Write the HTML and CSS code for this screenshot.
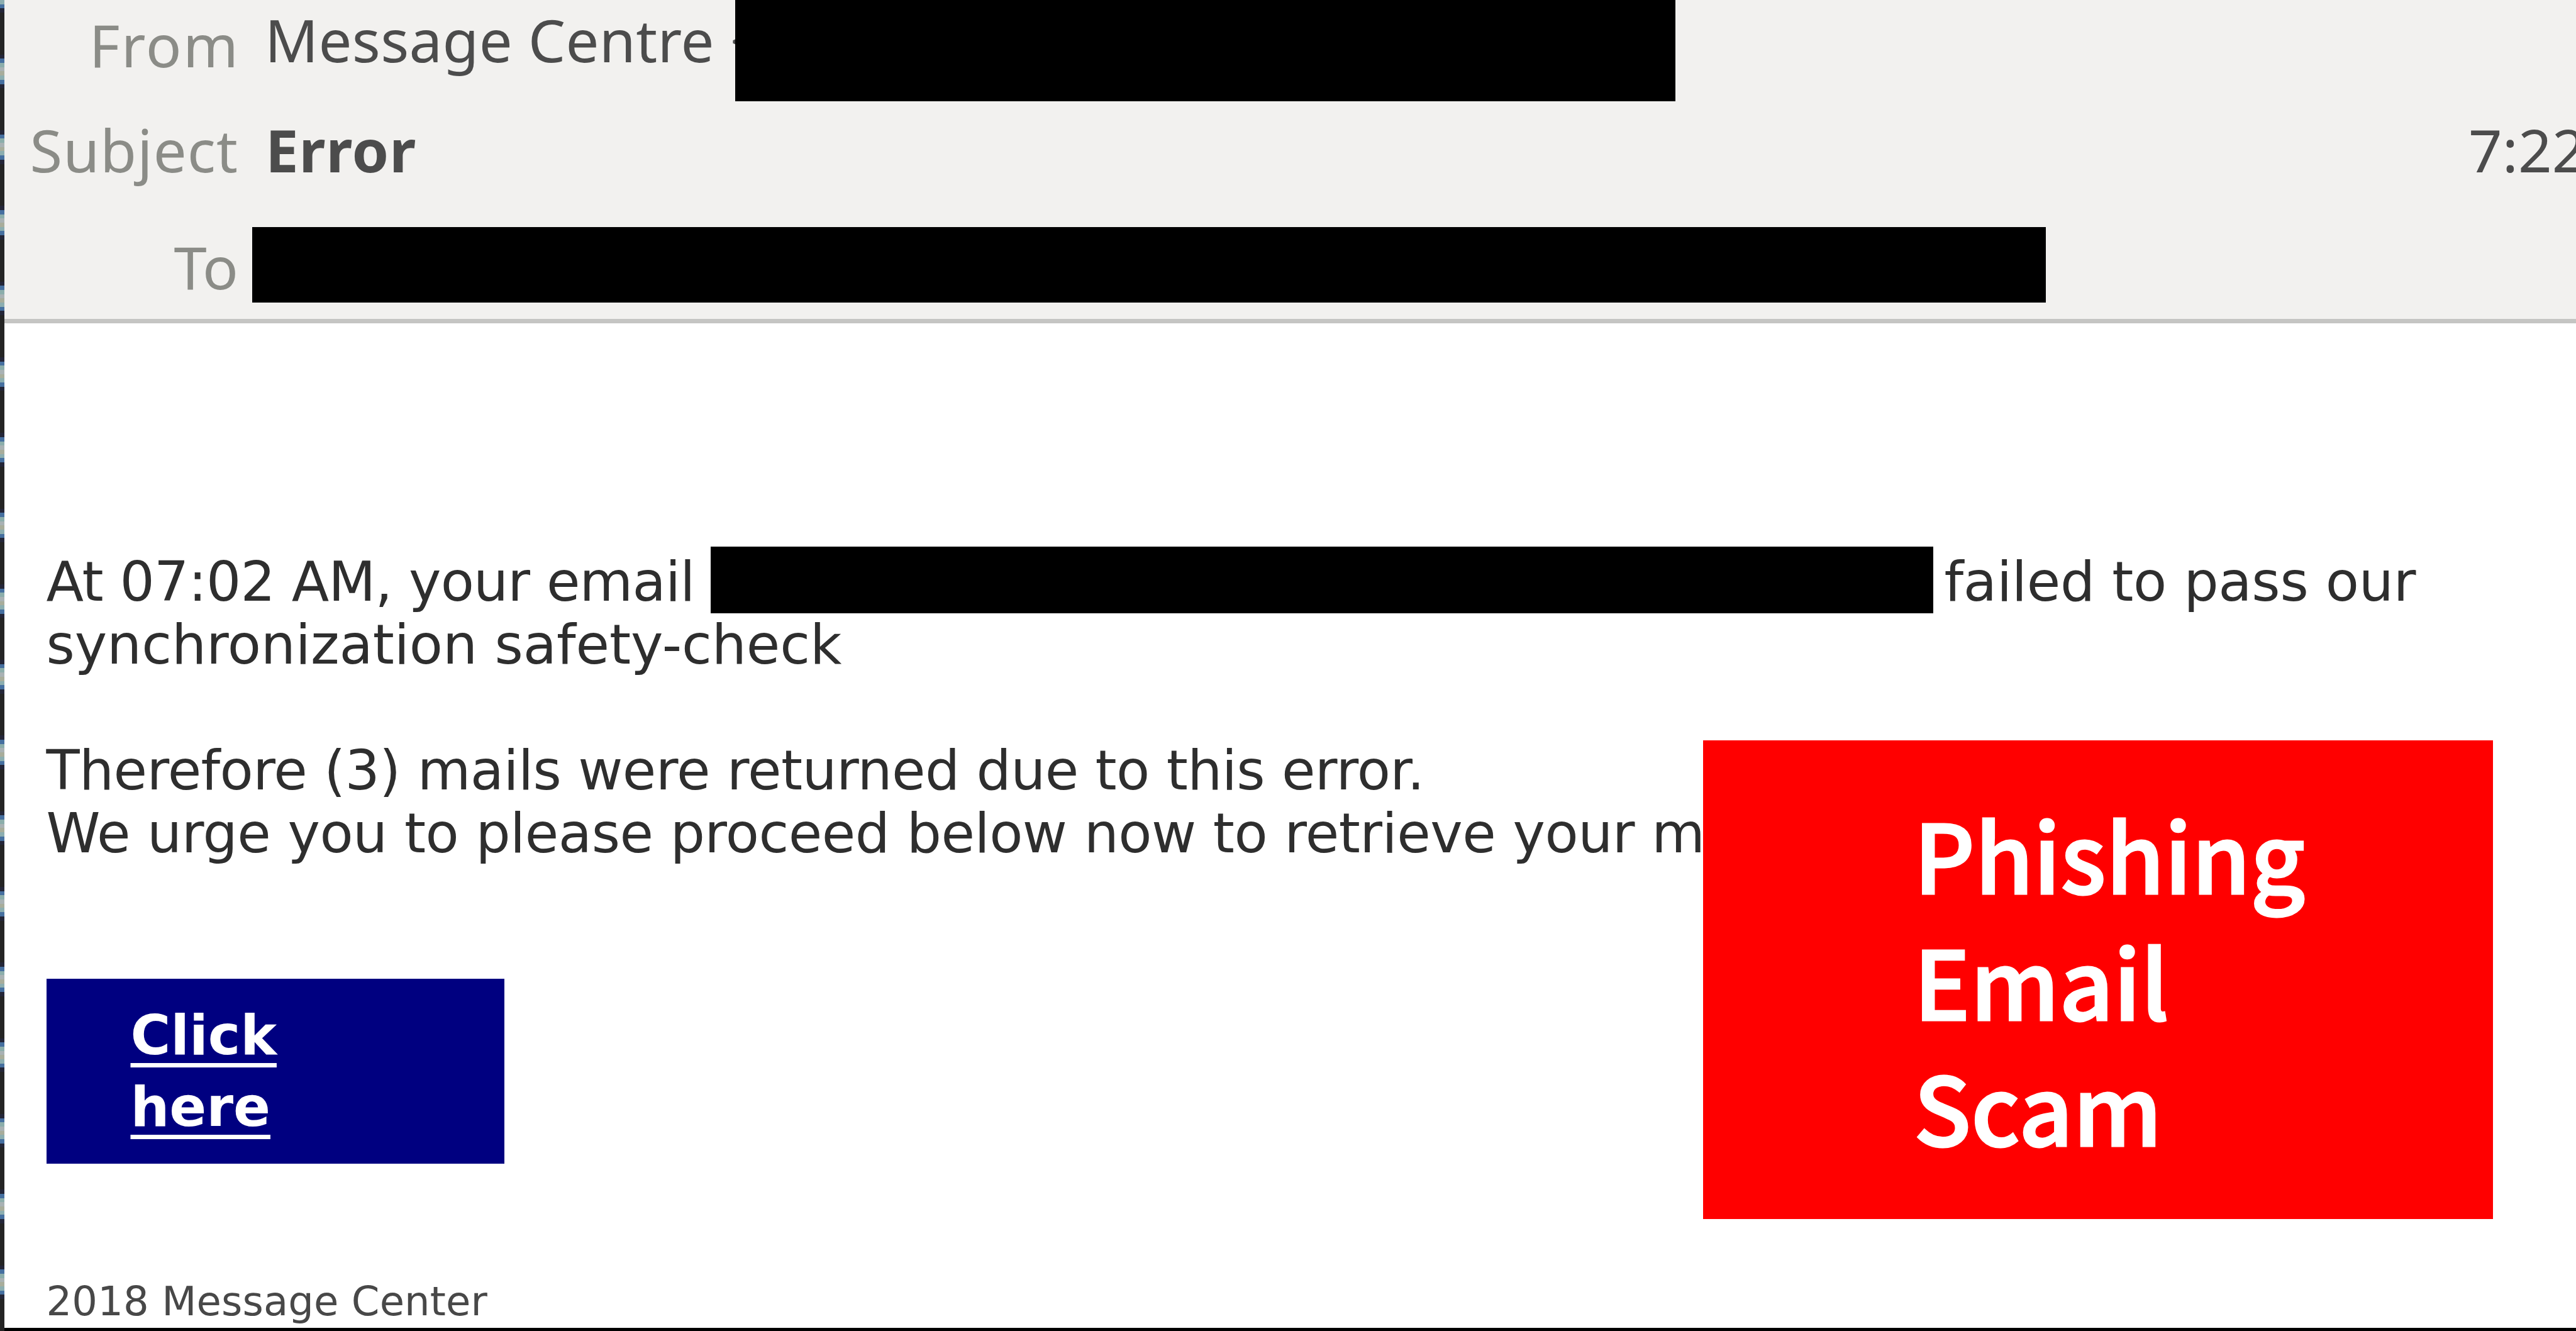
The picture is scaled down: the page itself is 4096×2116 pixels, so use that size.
FILE: index.html
```html
<!DOCTYPE html>
<html lang="en">
<head>
    <meta charset="UTF-8">
    <title>Error - Message Centre</title>
    <link rel="stylesheet" href="styles.css">
</head>
<body>
<div class="desktop-edge"></div>
<div class="mail-window">
    <div class="mail-header">
        <div class="header-row from-row">
            <div class="label">From</div>
            <div class="value">Message Centre &lt;</div>
            <div class="redacted redacted-from"></div>
        </div>
        <div class="header-row subject-row">
            <div class="label">Subject</div>
            <div class="value subject">Error</div>
            <div class="time">7:22</div>
        </div>
        <div class="header-row to-row">
            <div class="label">To</div>
            <div class="redacted redacted-to"></div>
        </div>
    </div>

    <div class="mail-body">
        <div class="first-line">
            <span class="intro">At 07:02 AM, your email</span>
            <div class="redacted redacted-email"></div>
            <span class="outro">failed to pass our</span>
        </div>
        <p>synchronization safety-check</p>
        <p class="returned">Therefore (3) mails were returned due to this error.</p>
        <p class="urge">We urge you to please proceed below now to retrieve your m</p>
        <div class="button"><a href="#">Click<br>here</a></div>
        <div class="footer">2018 Message Center</div>
    </div>
</div>

<div class="stamp">Phishing<br>Email<br>Scam</div>
</body>
</html>
```
FILE: styles.css
```css
* {
    margin: 0;
    padding: 0;
    box-sizing: border-box;
}
body {
    position: relative;
    display: flex;
    width: 4096px;
    height: 2116px;
    overflow: hidden;
    background: #fff;
}
.desktop-edge {
    width: 6.5px;
    flex: none;
    background: repeating-linear-gradient(to bottom,
        #4670a0 0 6.69px,
        #8caeab 6.69px 13.38px,
        #a9b2b4 13.38px 20.07px,
        #a8ad9b 20.07px 26.76px,
        #8caeb0 26.76px 33.45px,
        #4670a0 33.45px 40.14px,
        #242638 40.14px 46.83px,
        #242424 46.83px 113.6px,
        #242638 113.6px 120.3px);
    background-position: 0 -26.9px;
    background-size: 100% 2200px;
}
.mail-window {
    flex: 1;
    min-width: 0;
    overflow: hidden;
    border-bottom: 5px solid #000;
}
.mail-header {
    height: 514px;
    background: #f2f1ef;
    border-bottom: 7px solid #c5c5c3;
    font-family: "Noto Sans", sans-serif;
    font-size: 94px;
    line-height: 120px;
    color: #4c4c4c;
    white-space: nowrap;
}
.header-row {
    display: flex;
    align-items: flex-start;
}
.from-row {
    height: 178px;
}
.subject-row {
    height: 183px;
}
.label {
    width: 375.5px;
    flex: none;
    padding-right: 3px;
    text-align: right;
    color: #8b8c87;
}
.from-row .label {
    padding-top: 11px;
    padding-right: 1px;
    letter-spacing: 2.2px;
}
.subject-row .label {
    letter-spacing: 1.1px;
}
.to-row .label {
    padding-top: 3px;
}
.value {
    margin-left: 39px;
}
.from-row .value {
    width: 748px;
    padding-top: 3px;
    overflow: hidden;
    letter-spacing: 0.3px;
}
.subject {
    margin-left: 40px;
    font-weight: bold;
    letter-spacing: 0.9px;
}
.time {
    width: 171px;
    margin-left: auto;
}
.redacted {
    flex: none;
    background: #000;
}
.redacted-from {
    width: 1495px;
    height: 161px;
}
.redacted-to {
    width: 2852px;
    height: 120px;
    margin-left: 19px;
}
.mail-body {
    padding: 361px 0 0 67px;
    font-family: "DejaVu Sans", sans-serif;
    font-size: 87px;
    line-height: 100.1px;
    letter-spacing: -0.1px;
    color: #2e2e2e;
    white-space: nowrap;
}
.first-line {
    display: flex;
    height: 100px;
}
.intro {
    width: 1056px;
    letter-spacing: -0.88px;
}
.outro {
    letter-spacing: -0.28px;
}
.redacted-email {
    width: 1944px;
    height: 106px;
    margin: -6px 18px 0 0;
}
.returned {
    margin-top: 100px;
    letter-spacing: -0.63px;
}
.urge {
    letter-spacing: -0.5px;
}
.button {
    width: 728px;
    height: 294px;
    margin-top: 181px;
    padding: 34px 0 0 134px;
    background: #000080;
    line-height: 113.8px;
}
.button a {
    color: #fff;
    font-weight: bold;
    text-decoration: underline;
    text-decoration-thickness: 7px;
    text-decoration-skip-ink: none;
    text-underline-offset: 14px;
}
.footer {
    margin-top: 181px;
    font-size: 64px;
    line-height: 76px;
    letter-spacing: 0.1px;
    color: #484848;
}
/* warning stamp laid over the message */
.stamp {
    position: absolute;
    left: 2708px;
    top: 1177px;
    width: 1256px;
    height: 761px;
    padding: 79px 0 0 335px;
    background: #f00;
    color: #fff;
    font-family: "Noto Sans CJK SC", sans-serif;
    font-size: 150px;
    font-weight: 500;
    line-height: 200.5px;
    -webkit-text-stroke: 3px #fff;
}
```
